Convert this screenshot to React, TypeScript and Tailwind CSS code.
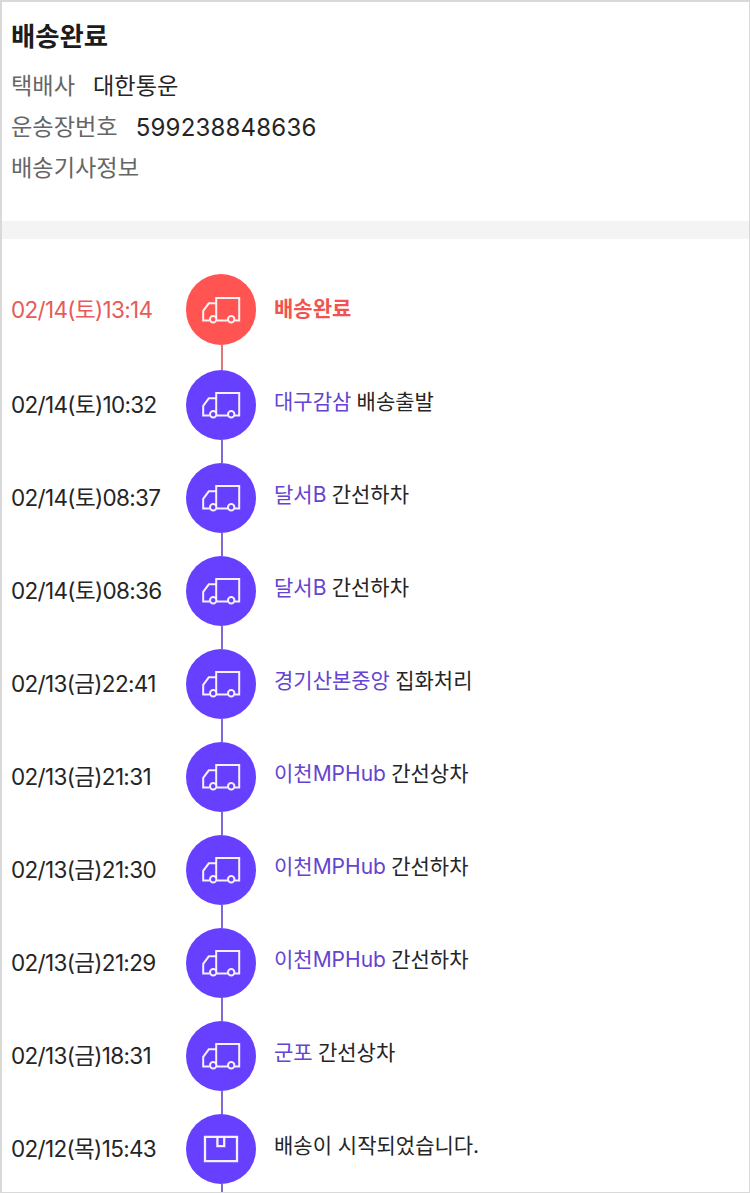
import { clsx } from "clsx";

type Step = {
  time: string;
  place?: string;
  status: string;
  icon?: "truck" | "box";
  done?: boolean;
};

const steps: Step[] = [
  { time: "02/14(토)13:14", status: "배송완료", done: true },
  { time: "02/14(토)10:32", place: "대구감삼", status: "배송출발" },
  { time: "02/14(토)08:37", place: "달서B", status: "간선하차" },
  { time: "02/14(토)08:36", place: "달서B", status: "간선하차" },
  { time: "02/13(금)22:41", place: "경기산본중앙", status: "집화처리" },
  { time: "02/13(금)21:31", place: "이천MPHub", status: "간선상차" },
  { time: "02/13(금)21:30", place: "이천MPHub", status: "간선하차" },
  { time: "02/13(금)21:29", place: "이천MPHub", status: "간선하차" },
  { time: "02/13(금)18:31", place: "군포", status: "간선상차" },
  { time: "02/12(목)15:43", status: "배송이 시작되었습니다.", icon: "box" },
];

function TruckIcon() {
  return (
    <svg width="40" height="28" viewBox="0 0 40 28" fill="none" stroke="#fff" strokeOpacity="0.92" strokeWidth="2">
      <path d="M8.6 24.5H2.2V14.9L7.8 7.3H15.2" />
      <path d="M15.2 21.8V2H38.2V24.5H33.6M26.8 24.5H15.6" />
      <circle cx="12.2" cy="23.3" r="3.2" />
      <circle cx="30.2" cy="23.3" r="3.2" />
    </svg>
  );
}

function BoxIcon() {
  return (
    <svg width="36" height="28" viewBox="0 0 36 28" fill="none" stroke="#fff" strokeOpacity="0.92" strokeWidth="2.3">
      <path d="M2 1.8H34V26.2H2Z" />
      <path d="M14.4 1.8V11.2H21.2V1.8" />
    </svg>
  );
}

function Row({ step }: { step: Step }) {
  return (
    <li className={clsx("flex shrink-0", step.done ? "h-[95.5px]" : "h-[93px]")}>
      <p
        className={clsx(
          "w-[174.5px] text-[22.5px] leading-9 tracking-[-0.67px]",
          step.done ? "pt-[18px] text-[#e85a58]" : "pt-[17px] text-[#252525]",
        )}
      >
        {step.time}
      </p>
      <div className="flex w-[70.5px] flex-col items-center">
        <div
          className={clsx(
            "flex size-[70.5px] shrink-0 items-center justify-center rounded-full",
            step.done ? "bg-[#ff5452]" : "bg-[#663fff]",
          )}
        >
          {step.icon === "box" ? <BoxIcon /> : <TruckIcon />}
        </div>
        <div className={clsx("ml-[1.5px] w-0.5 flex-1", step.done ? "bg-[#de7777]" : "bg-[#8069d2]")} />
      </div>
      <p
        className={clsx(
          "ml-[18px] text-[21px] leading-8",
          step.done ? "pt-[19px] font-bold text-[#f05350]" : "pt-[16px] text-[#252525]",
        )}
      >
        {step.place && <span className="text-[#6444d2]">{step.place}</span>}
        {step.place && <span className="tracking-[-0.6px]"> </span>}
        {step.status}
      </p>
    </li>
  );
}

export default function App() {
  return (
    <main className="flex h-[1193px] w-[750px] flex-col overflow-hidden border-2 border-r border-b border-[#d9d9d9] bg-white font-['Inter','Noto_Sans_CJK_KR',sans-serif] whitespace-nowrap">
      <header className="h-[219px] shrink-0 px-[9px] pt-[14px]">
        <h1 className="text-[26.4px] leading-10 font-bold text-[#1c1c1c]">배송완료</h1>
        <dl className="mt-[10px] text-[23.2px] leading-[41px] text-[#666]">
          <div className="flex gap-[18px]">
            <dt>택배사</dt>
            <dd className="text-[#252525]">대한통운</dd>
          </div>
          <div className="flex gap-[18px]">
            <dt>운송장번호</dt>
            <dd className="text-2xl leading-[41px] tracking-[0.2px] text-[#252525]">599238848636</dd>
          </div>
          <div>
            <dt>배송기사정보</dt>
          </div>
        </dl>
      </header>
      <div className="h-[18px] shrink-0 bg-[#f4f4f4]" />
      <ol className="flex flex-col px-[9px] pt-[35.3px]">
        {steps.map((step) => (
          <Row key={step.time} step={step} />
        ))}
      </ol>
    </main>
  );
}
